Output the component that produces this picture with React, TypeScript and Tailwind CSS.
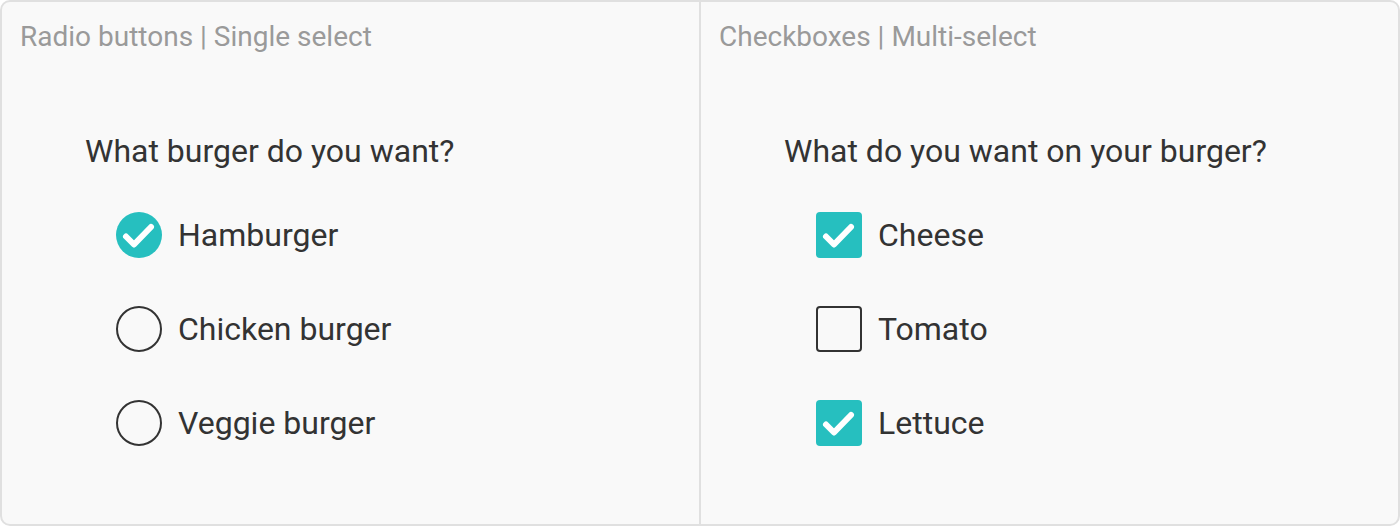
import React from 'react'

const TEAL = 'bg-[#26bfbf]'

function Check() {
  return (
    <svg viewBox="0 0 46 46" className="w-[46px] h-[46px]">
      <path d="M10 24.5 L18 32.5 L35 15" fill="none" stroke="white" strokeWidth="6" strokeLinecap="round" strokeLinejoin="round" />
    </svg>
  )
}

function Radio({ checked }: { checked?: boolean }) {
  if (checked) {
    return (
      <span className={`w-[46px] h-[46px] rounded-full ${TEAL} flex items-center justify-center shrink-0`}>
        <Check />
      </span>
    )
  }
  return <span className="w-[46px] h-[46px] rounded-full border-2 border-[#333333] shrink-0" />
}

function Box({ checked }: { checked?: boolean }) {
  if (checked) {
    return (
      <span className={`w-[46px] h-[46px] rounded-[4px] ${TEAL} flex items-center justify-center shrink-0`}>
        <Check />
      </span>
    )
  }
  return <span className="w-[46px] h-[46px] rounded-[4px] border-2 border-[#333333] shrink-0" />
}

function Panel({
  title,
  question,
  options,
  kind,
}: {
  title: string
  question: string
  options: { label: string; checked: boolean }[]
  kind: 'radio' | 'box'
}) {
  return (
    <div className="flex-1 pt-[20px] pl-[18px]">
      <div className="text-[28px] leading-[30px] text-[#9a9a9a]">{title}</div>
      <div className="pl-[65px] mt-[81px]">
        <div className="text-[32px] leading-[36px] text-[#333333]">{question}</div>
        <div className={`${kind === 'radio' ? 'pl-[31px]' : 'pl-[32px]'} mt-[43px] flex flex-col gap-[48px]`}>
          {options.map((o) => (
            <div key={o.label} className="flex items-center gap-[16px] h-[46px]">
              {kind === 'radio' ? <Radio checked={o.checked} /> : <Box checked={o.checked} />}
              <span className="text-[32px] leading-[36px] text-[#333333]">{o.label}</span>
            </div>
          ))}
        </div>
      </div>
    </div>
  )
}

export default function App() {
  return (
    <div className="w-[1400px] h-[526px] bg-white" style={{ fontFamily: 'Roboto, sans-serif' }}>
      <div className="w-full h-full border-2 border-[#e0e0e0] rounded-[10px] bg-[#f9f9f9] flex overflow-hidden">
        <Panel
          title="Radio buttons | Single select"
          question="What burger do you want?"
          kind="radio"
          options={[
            { label: 'Hamburger', checked: true },
            { label: 'Chicken burger', checked: false },
            { label: 'Veggie burger', checked: false },
          ]}
        />
        <div className="w-[2px] bg-[#e0e0e0]" />
        <Panel
          title="Checkboxes | Multi-select"
          question="What do you want on your burger?"
          kind="box"
          options={[
            { label: 'Cheese', checked: true },
            { label: 'Tomato', checked: false },
            { label: 'Lettuce', checked: true },
          ]}
        />
      </div>
    </div>
  )
}
